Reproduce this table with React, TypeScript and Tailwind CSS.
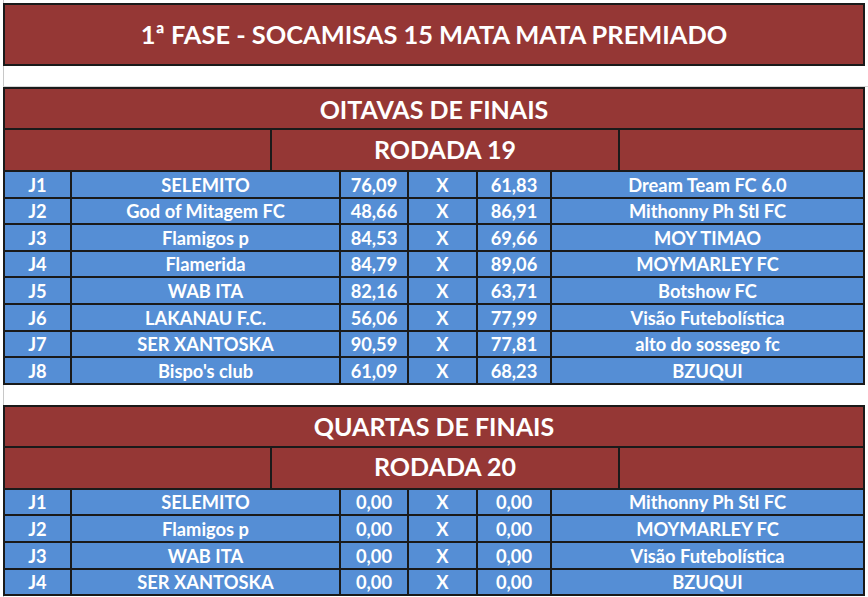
const matchesR19 = [
  ['J1', 'SELEMITO', '76,09', '61,83', 'Dream Team FC 6.0'],
  ['J2', 'God of Mitagem FC', '48,66', '86,91', 'Mithonny Ph Stl FC'],
  ['J3', 'Flamigos p', '84,53', '69,66', 'MOY TIMAO'],
  ['J4', 'Flamerida', '84,79', '89,06', 'MOYMARLEY FC'],
  ['J5', 'WAB ITA', '82,16', '63,71', 'Botshow FC'],
  ['J6', 'LAKANAU F.C.', '56,06', '77,99', 'Visão Futebolística'],
  ['J7', 'SER XANTOSKA', '90,59', '77,81', 'alto do sossego fc'],
  ['J8', "Bispo's club", '61,09', '68,23', 'BZUQUI'],
];

const matchesR20 = [
  ['J1', 'SELEMITO', '0,00', '0,00', 'Mithonny Ph Stl FC'],
  ['J2', 'Flamigos p', '0,00', '0,00', 'MOYMARLEY FC'],
  ['J3', 'WAB ITA', '0,00', '0,00', 'Visão Futebolística'],
  ['J4', 'SER XANTOSKA', '0,00', '0,00', 'BZUQUI'],
];

function Section({ title, round, rows }: { title: string; round: string; rows: string[][] }) {
  return (
    <div className="w-[862px] border-l-2 border-t-2 border-[#1a1a1a]">
      {/* Phase header */}
      <div className="h-[41px] bg-[#953735] border-r-2 border-b-2 border-[#1a1a1a] flex items-center justify-center pt-[1px] text-[25px] leading-none">
        {title}
      </div>
      {/* Round header */}
      <div className="grid grid-cols-[267px_348px_245px] h-[42px]">
        <div className="bg-[#953735] border-r-2 border-b-2 border-[#1a1a1a]" />
        <div className="bg-[#953735] border-r-2 border-b-2 border-[#1a1a1a] flex items-center justify-center pb-[2px] text-[25px] leading-none">
          {round}
        </div>
        <div className="bg-[#953735] border-r-2 border-b-2 border-[#1a1a1a]" />
      </div>
      {/* Matches */}
      {rows.map((r) => (
        <div key={r[0]} className="grid grid-cols-[67px_269px_68px_69px_74px_313px] h-[26.6px] text-[18.3px]">
          {[r[0], r[1], r[2], 'X', r[3], r[4]].map((c, i) => (
            <div
              key={i}
              className="bg-[#558ed5] border-r-2 border-b-2 border-[#1a1a1a] flex items-center justify-center pt-px leading-none"
            >
              {c}
            </div>
          ))}
        </div>
      ))}
    </div>
  );
}

export default function App() {
  return (
    <div
      className="w-[868px] h-[597px] bg-white overflow-hidden text-white font-bold"
      style={{ fontFamily: 'Lato, "Open Sans", sans-serif' }}
    >
      <div className="ml-[3px] pt-[3px] h-full border-l border-[#c8c8c8]">
        <div className="w-[862px] h-[63px] -ml-px bg-[#953735] border-2 border-[#1a1a1a] flex items-center justify-center pt-px text-[25.4px] leading-none">
          1ª FASE - SOCAMISAS 15 MATA MATA PREMIADO
        </div>
        <div className="h-[21px] -ml-px border-b border-[#d4d4d4]" />
        <div className="-ml-px">
          <Section title="OITAVAS DE FINAIS" round="RODADA 19" rows={matchesR19} />
        </div>
        <div className="h-[20px]" />
        <div className="-ml-px">
          <Section title="QUARTAS DE FINAIS" round="RODADA 20" rows={matchesR20} />
        </div>
      </div>
    </div>
  );
}
